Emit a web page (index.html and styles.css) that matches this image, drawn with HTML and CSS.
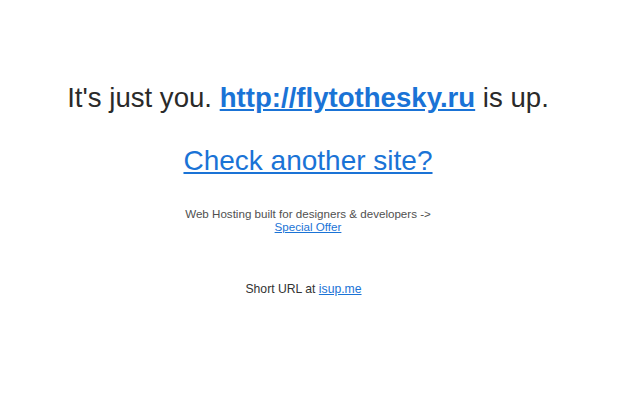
FILE: index.html
```html
<!DOCTYPE html>
<html>
<head>
<meta charset="utf-8">
<link rel="stylesheet" href="styles.css">
</head>
<body>
<div class="container">
  <p class="status">It's just you. <a class="site" href="#">http://flytothesky.ru</a> is up.</p>
  <p class="again"><a href="#">Check another site?</a></p>
  <p class="promo">Web Hosting built for designers &amp; developers -&gt;<br><a href="#">Special Offer</a></p>
  <p class="short">Short URL at <a href="#">isup.me</a></p>
</div>
</body>
</html>
```

FILE: styles.css
```css
html, body {
  margin: 0;
  padding: 0;
  background: #ffffff;
}
.container {
  font-family: "Liberation Sans", Arial, sans-serif;
  text-align: center;
  color: #2a2a2a;
  padding: 82px 24px 0 0;
}
.container p {
  margin: 0;
}
.container a {
  color: #1a73d6;
  text-decoration: underline;
}
.status {
  font-size: 27.6px;
  line-height: 32px;
}
.status .site {
  font-weight: bold;
}
.again {
  font-size: 28px;
  line-height: 32px;
  margin-top: 31px !important;
}
.promo {
  font-size: 11.6px;
  line-height: 13px;
  color: #505050;
  margin-top: 30px !important;
}
.short {
  font-size: 12.2px;
  line-height: 14px;
  color: #333333;
  margin-top: 49px !important;
  padding-right: 9px;
}
```
